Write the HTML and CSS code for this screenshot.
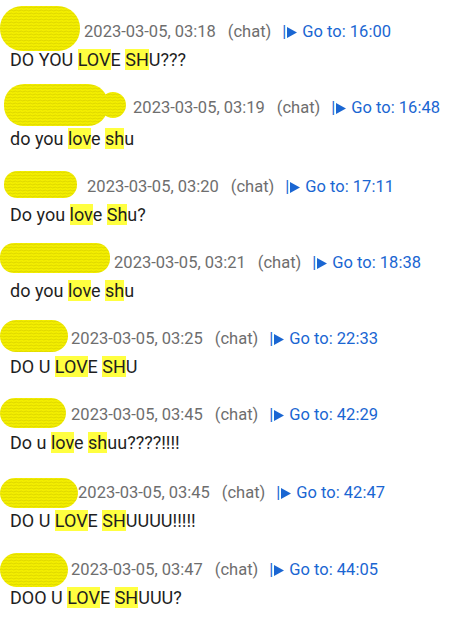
FILE: index.html
```html
<!DOCTYPE html>
<html>
<head>
<meta charset="utf-8">
<link rel="stylesheet" href="styles.css">
</head>
<body>
<svg class="defs" width="0" height="0" aria-hidden="true">
  <defs>
    <pattern id="scrib" width="5" height="3" patternUnits="userSpaceOnUse">
      <rect width="5" height="3" fill="#f3ee00"/>
      <path d="M0 1.5 Q1.25 0.6 2.5 1.5 T5 1.5" stroke="#cfc800" stroke-width="0.6" fill="none"/>
    </pattern>
  </defs>
</svg>
<div class="list">
  <div class="item">
    <div class="head">
      <span class="author w1"><svg class="blob b1" viewBox="0 0 80 45"><rect x="0" y="0" width="80" height="45" rx="22" fill="url(#scrib)"/></svg></span>
      <span class="time">2023-03-05, 03:18</span><span class="src">(chat)</span><a class="goto"><span class="bar">|</span><svg class="tri" viewBox="0 0 10 11"><path d="M0 0 L10 5.5 L0 11 Z"/></svg>Go to: 16:00</a>
    </div>
    <div class="msg">DO YOU <mark>LOV</mark>E <mark>SH</mark>U???</div>
  </div>
  <div class="item tall">
    <div class="head">
      <span class="author w2"><svg class="blob b2" viewBox="0 0 122 42"><rect x="0" y="0" width="104" height="42" rx="20" fill="url(#scrib)"/><circle cx="109" cy="21" r="13" fill="url(#scrib)"/></svg></span>
      <span class="time">2023-03-05, 03:19</span><span class="src">(chat)</span><a class="goto"><span class="bar">|</span><svg class="tri" viewBox="0 0 10 11"><path d="M0 0 L10 5.5 L0 11 Z"/></svg>Go to: 16:48</a>
    </div>
    <div class="msg">do you <mark>lov</mark>e <mark>sh</mark>u</div>
  </div>
  <div class="item">
    <div class="head">
      <span class="author w3"><svg class="blob b3" viewBox="0 0 73 27"><rect x="0" y="0" width="73" height="27" rx="13" fill="url(#scrib)"/></svg></span>
      <span class="time">2023-03-05, 03:20</span><span class="src">(chat)</span><a class="goto"><span class="bar">|</span><svg class="tri" viewBox="0 0 10 11"><path d="M0 0 L10 5.5 L0 11 Z"/></svg>Go to: 17:11</a>
    </div>
    <div class="msg">Do you <mark>lov</mark>e <mark>Sh</mark>u?</div>
  </div>
  <div class="item">
    <div class="head">
      <span class="author w4"><svg class="blob b4" viewBox="0 0 110 30"><rect x="0" y="0" width="110" height="30" rx="14" fill="url(#scrib)"/></svg></span>
      <span class="time">2023-03-05, 03:21</span><span class="src">(chat)</span><a class="goto"><span class="bar">|</span><svg class="tri" viewBox="0 0 10 11"><path d="M0 0 L10 5.5 L0 11 Z"/></svg>Go to: 18:38</a>
    </div>
    <div class="msg">do you <mark>lov</mark>e <mark>sh</mark>u</div>
  </div>
  <div class="item">
    <div class="head">
      <span class="author w5"><svg class="blob b5" viewBox="0 0 68 32"><rect x="0" y="0" width="68" height="32" rx="16" fill="url(#scrib)"/></svg></span>
      <span class="time">2023-03-05, 03:25</span><span class="src">(chat)</span><a class="goto"><span class="bar">|</span><svg class="tri" viewBox="0 0 10 11"><path d="M0 0 L10 5.5 L0 11 Z"/></svg>Go to: 22:33</a>
    </div>
    <div class="msg">DO U <mark>LOV</mark>E <mark>SH</mark>U</div>
  </div>
  <div class="item">
    <div class="head">
      <span class="author w6"><svg class="blob b6" viewBox="0 0 66 30"><rect x="0" y="0" width="66" height="30" rx="15" fill="url(#scrib)"/></svg></span>
      <span class="time">2023-03-05, 03:45</span><span class="src">(chat)</span><a class="goto"><span class="bar">|</span><svg class="tri" viewBox="0 0 10 11"><path d="M0 0 L10 5.5 L0 11 Z"/></svg>Go to: 42:29</a>
    </div>
    <div class="msg">Do u <mark>lov</mark>e <mark>sh</mark>uu????!!!!</div>
  </div>
  <div class="item push2">
    <div class="head">
      <span class="author w7"><svg class="blob b7" viewBox="0 0 78 30"><rect x="0" y="0" width="78" height="30" rx="15" fill="url(#scrib)"/></svg></span>
      <span class="time">2023-03-05, 03:45</span><span class="src">(chat)</span><a class="goto"><span class="bar">|</span><svg class="tri" viewBox="0 0 10 11"><path d="M0 0 L10 5.5 L0 11 Z"/></svg>Go to: 42:47</a>
    </div>
    <div class="msg">DO U <mark>LOV</mark>E <mark>SH</mark>UUUU!!!!!</div>
  </div>
  <div class="item push1">
    <div class="head">
      <span class="author w8"><svg class="blob b8" viewBox="0 0 68 34"><rect x="0" y="0" width="68" height="34" rx="17" fill="url(#scrib)"/></svg></span>
      <span class="time">2023-03-05, 03:47</span><span class="src">(chat)</span><a class="goto"><span class="bar">|</span><svg class="tri" viewBox="0 0 10 11"><path d="M0 0 L10 5.5 L0 11 Z"/></svg>Go to: 44:05</a>
    </div>
    <div class="msg">DOO U <mark>LOV</mark>E <mark>SH</mark>UUU?</div>
  </div>
</div>
</body>
</html>
```
FILE: styles.css
```css
html, body {
  margin: 0;
  padding: 0;
  background: #ffffff;
}
body {
  font-family: Roboto, "Liberation Sans", sans-serif;
  color: #1f1f1f;
}
.defs {
  position: absolute;
  width: 0;
  height: 0;
}
.list {
  padding: 20px 0 0 10px;
  display: flex;
  flex-direction: column;
  gap: 24px;
}
.item {
  display: flex;
  flex-direction: column;
  gap: 4px;
}
.item.tall {
  gap: 7px;
}
.item.push2 {
  margin-top: 2px;
}
.item.push1 {
  margin-top: 1px;
}
.head {
  height: 24px;
  line-height: 24px;
  font-size: 16.5px;
  color: #6e6e6e;
  white-space: nowrap;
}
.author {
  position: relative;
  display: inline-block;
  height: 24px;
  vertical-align: top;
  margin-right: 1px;
}
.blob {
  position: absolute;
  display: block;
}
.w1 { width: 69px; }
.w2 { width: 118px; }
.w3 { width: 72px; }
.w4 { width: 99px; }
.w5 { width: 56px; }
.w6 { width: 56px; }
.w7 { width: 63px; }
.w8 { width: 56px; }
.b1 { left: -10px; top: -14px; width: 80px; height: 45px; }
.b2 { left: -6px; top: -12px; width: 122px; height: 42px; }
.b3 { left: -6px; top: -4px; width: 73px; height: 27px; }
.b4 { left: -10px; top: -8px; width: 110px; height: 30px; }
.b5 { left: -10px; top: -7px; width: 68px; height: 32px; }
.b6 { left: -10px; top: -5px; width: 66px; height: 30px; }
.b7 { left: -10px; top: -3px; width: 78px; height: 30px; }
.b8 { left: -10px; top: -5px; width: 68px; height: 34px; }
.src {
  margin-left: 12px;
}
.goto {
  margin-left: 11px;
  color: #1a66d2;
  text-decoration: none;
}
.bar {
  margin-right: 1px;
}
.tri {
  width: 10px;
  height: 11px;
  fill: #1a66d2;
  margin-right: 5px;
  vertical-align: -1px;
}
.msg {
  height: 24px;
  line-height: 24px;
  font-size: 18px;
  color: #1f1f1f;
}
mark {
  background: #ffff40;
  color: inherit;
}
```
